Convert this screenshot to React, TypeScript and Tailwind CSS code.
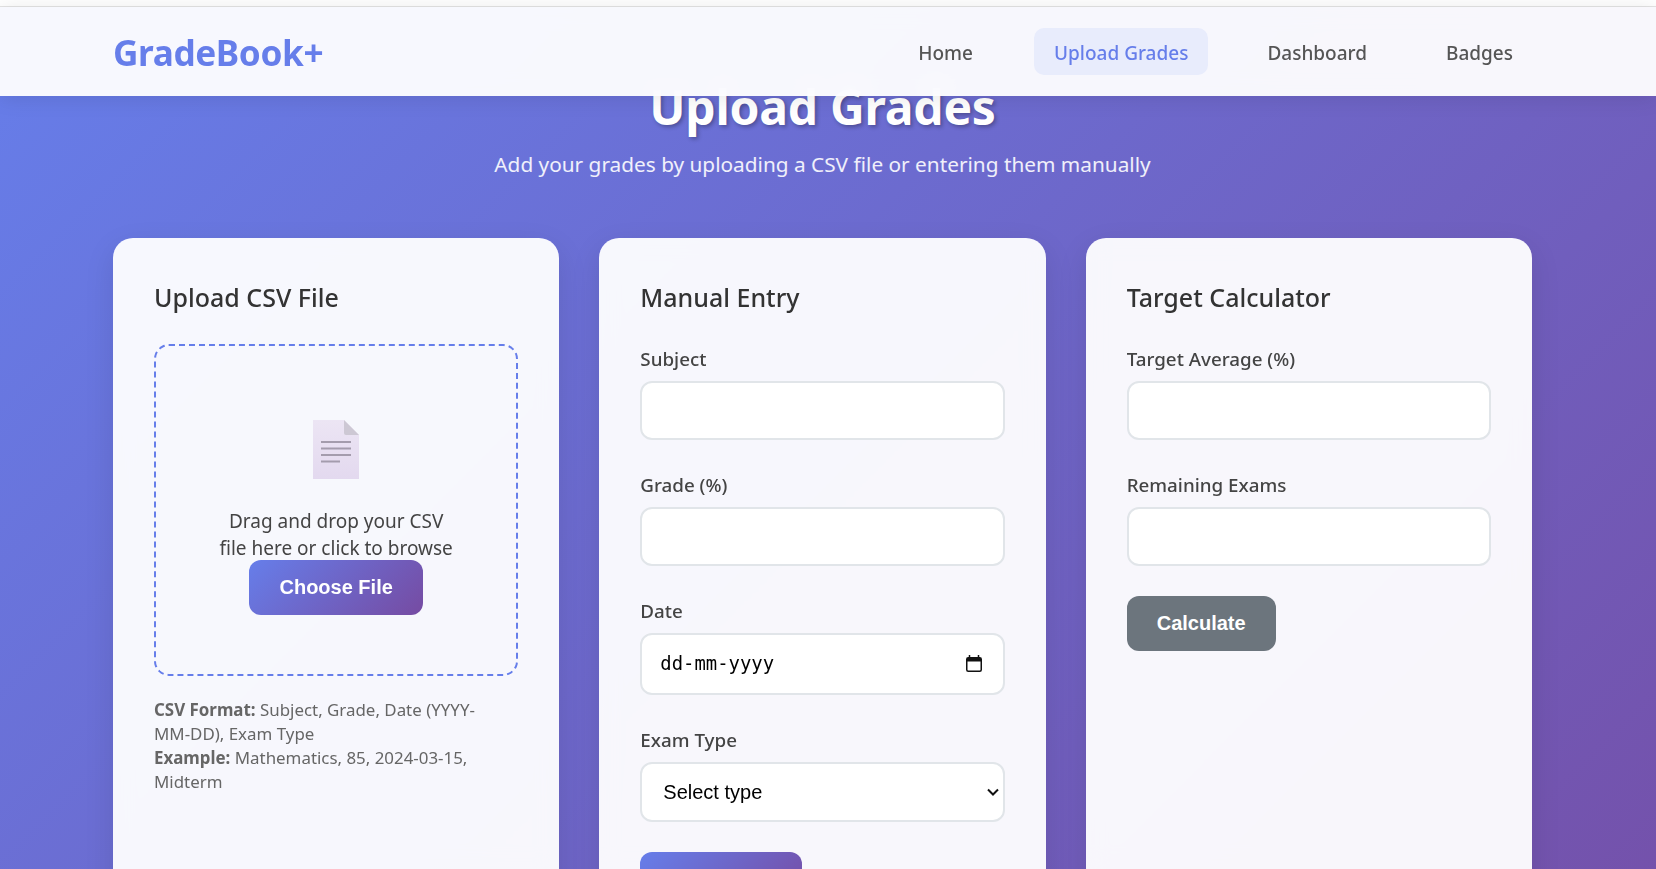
const sans = '[font-family:"Noto_Sans","Open_Sans",sans-serif]'

const inputClass = 'h-[59px] w-full rounded-xl border-2 border-[#e1e5e9] bg-white px-[17px] text-base text-black outline-none'
const cardClass = 'h-[700px] rounded-[20px] bg-white/95 p-[41px] shadow-[0_10px_30px_rgba(0,0,0,0.1)] backdrop-blur-[10px]'
const titleClass = 'mb-[29px] text-[25px] leading-[36px] font-[550] text-[#333]'

function Field({ label, children }: { label: string; children: React.ReactNode }) {
  return (
    <div className="mb-[30px]">
      <label className="mb-[9px] block h-[28px] text-[18.8px] leading-[30px] font-[550] text-[#444]">{label}</label>
      {children}
    </div>
  )
}

function FileIcon() {
  return (
    <svg width="46" height="59" viewBox="0 0 46 59" className="mx-auto block">
      <defs>
        <linearGradient id="page" x1="0" y1="0" x2="0" y2="1">
          <stop offset="0" stopColor="#ece5f4" />
          <stop offset="1" stopColor="#e3d9ef" />
        </linearGradient>
      </defs>
      <path d="M0 0H31L46 15V59H0Z" fill="url(#page)" />
      <path d="M31 0L46 15H33Q31 15 31 13Z" fill="#cdc8d4" />
      <path d="M8 22H38M8 28.500H38M8 35H38M8 41.500H27" stroke="#a49cad" strokeWidth="2" />
    </svg>
  )
}

function CalendarIcon() {
  return (
    <svg width="16" height="17" viewBox="0 0 16 17" className="shrink-0">
      <rect x="0.75" y="2.75" width="14.5" height="13.500" rx="1.500" fill="none" stroke="#111" strokeWidth="1.500" />
      <path d="M1 3H15V6.500H1Z" fill="#111" />
      <path d="M3.500 0V3M12.500 0V3" stroke="#111" strokeWidth="1.500" />
    </svg>
  )
}

export default function App() {
  return (
    <div className={`h-[869px] overflow-hidden bg-[linear-gradient(135deg,#667eea_0%,#764ba2_100%)] bg-[length:100%_1250px] bg-no-repeat ${sans}`}>
      <div className="h-[7px] border-b border-[#e4e4e4] bg-white" />
      <header className="relative z-10 flex h-[89px] items-center justify-between bg-white/95 pr-[123px] pl-[113px] shadow-[0_2px_20px_rgba(0,0,0,0.1)] backdrop-blur-[10px]">
        <div className="pt-[2px] text-[35.2px] font-bold tracking-[-0.4px] text-[#667eea]">GradeBook+</div>
        <nav className="flex items-center gap-[39px] text-[19px] leading-[27px] font-medium text-[#555]">
          <a className="pt-[12px] pr-[22px] pb-[8px] pl-5">Home</a>
          <a className="rounded-[10px] bg-[#e8ecfc] px-5 pt-[12px] pb-[8px] text-[#667eea]">Upload Grades</a>
          <a className="px-5 pt-[12px] pb-[8px]">Dashboard</a>
          <a className="px-5 pt-[12px] pb-[8px]">Badges</a>
        </nav>
      </header>

      <main className="-mt-[21px] ml-[113px] w-[1419px]">
        <div className="mb-[57px] text-center text-white">
          <h1 className="text-[48px] leading-[64px] font-bold tracking-[-0.25px] [text-shadow:2px_2px_4px_rgba(0,0,0,0.3)]">Upload Grades</h1>
          <p className="mt-[9px] text-[20.8px] leading-[33px] text-white/90">Add your grades by uploading a CSV file or entering them manually</p>
        </div>

        <div className="grid grid-cols-3 gap-10">
          <section className={cardClass}>
            <h2 className={titleClass}>Upload CSV File</h2>
            <div className="flex h-[332px] flex-col items-center rounded-[15px] border-2 border-dashed border-[#667eea] pt-[74px] text-center">
              <FileIcon />
              <p className="mt-[29px] -mb-px w-[244px] text-[19px] leading-[26.6px] text-[#444]">Drag and drop your CSV file here or click to browse</p>
              <button className="h-[55px] w-[174px] shrink-0 rounded-xl bg-[linear-gradient(135deg,#667eea,#764ba2)] pb-[2px] font-['Liberation_Sans'] text-[20px] font-bold text-white">Choose File</button>
            </div>
            <p className="mt-[22px] w-[335px] text-[16.9px] leading-[24px] text-[#666]">
              <strong>CSV Format:</strong> Subject, Grade, Date (YYYY-MM-DD), Exam Type
              <br />
              <strong>Example:</strong> Mathematics, 85, 2024-03-15, Midterm
            </p>
          </section>

          <section className={cardClass}>
            <h2 className={titleClass}>Manual Entry</h2>
            <Field label="Subject"><input className={inputClass} /></Field>
            <Field label="Grade (%)"><input className={inputClass} /></Field>
            <Field label="Date">
              <div className="flex h-[62px] items-center justify-between rounded-xl border-2 border-[#e1e5e9] bg-white pr-[21px] pb-[2px] pl-[18px]">
                <span className="font-['DejaVu_Sans_Mono'] text-[18.9px] text-black">dd-mm-yyyy</span>
                <CalendarIcon />
              </div>
            </Field>
            <Field label="Exam Type">
              <div className="relative">
                <select className="h-[60px] w-full appearance-none rounded-xl border-2 border-[#e1e5e9] bg-white pr-[17px] pl-[21px] font-['Liberation_Sans'] text-[20px] text-black outline-none">
                  <option>Select type</option>
                </select>
                <svg width="12" height="8" viewBox="0 0 12 8" className="pointer-events-none absolute top-[26px] right-[6px]">
                  <path d="M1 1.500L6 6.500L11 1.500" fill="none" stroke="#111" strokeWidth="2" />
                </svg>
              </div>
            </Field>
            <button className="h-[55px] w-[162px] rounded-xl bg-[linear-gradient(135deg,#667eea,#764ba2)] font-['Liberation_Sans'] text-[20px] font-bold text-white">Add Grade</button>
          </section>

          <section className={cardClass}>
            <h2 className={titleClass}>Target Calculator</h2>
            <Field label="Target Average (%)"><input className={inputClass} /></Field>
            <Field label="Remaining Exams"><input className={inputClass} /></Field>
            <button className="h-[55px] w-[149px] rounded-xl bg-[#6c757d] pb-[2px] font-['Liberation_Sans'] text-[20px] font-bold text-white">Calculate</button>
          </section>
        </div>
      </main>
    </div>
  )
}
